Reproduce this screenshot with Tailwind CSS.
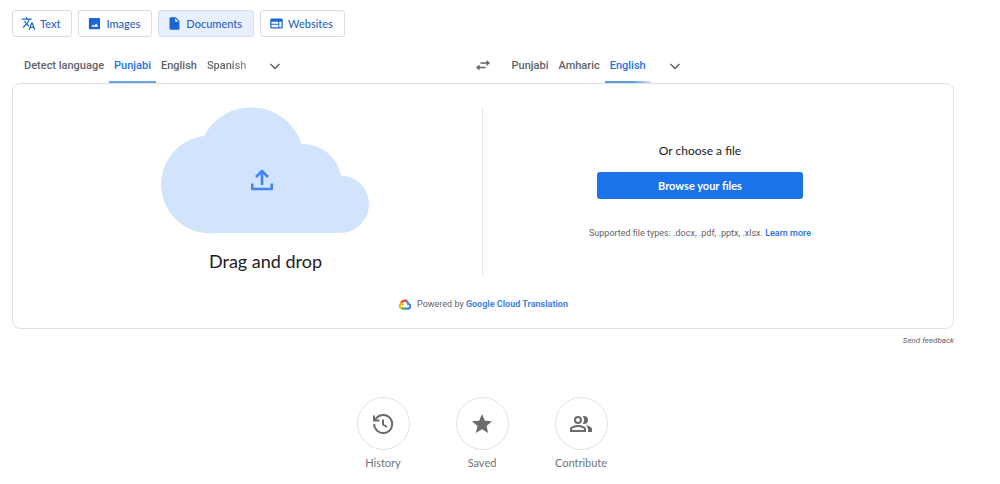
<!DOCTYPE html>
<html lang="en">
<head>
<meta charset="utf-8">
<meta name="viewport" content="width=device-width, initial-scale=1">
<title>Translate documents</title>
<script src="https://cdn.jsdelivr.net/npm/@tailwindcss/browser@4"></script>
</head>
<body class="bg-white font-['Roboto',sans-serif] text-[11px] leading-4 text-[#5f6368]">
<main class="pt-[10px] pr-[46px] pl-3">
  <nav aria-label="Translation types" class="flex gap-[6px] font-['Lato',sans-serif] font-medium text-[#2a63c4]">
    <button class="flex h-[27px] items-center gap-1 rounded-[3px] border border-[#dadce0] pr-[11px] pl-2">
      <svg class="size-[15px]" viewBox="0 0 24 24" fill="#1967d2" aria-hidden="true"><path d="M12.87 15.07l-2.54-2.51.03-.03A17.52 17.52 0 0 0 14.07 6H17V4h-7V2H8v2H1v2h11.17C11.5 7.92 10.44 9.75 9 11.35 8.07 10.32 7.3 9.19 6.69 8h-2c.73 1.63 1.73 3.17 2.98 4.56l-5.09 5.02L4 19l5-5 3.11 3.11.76-2.04zM18.5 10h-2L12 22h2l1.12-3h4.75L21 22h2l-4.5-12zm-2.62 7l1.62-4.33L19.12 17h-3.24z"/></svg>
      Text
    </button>
    <button class="flex h-[27px] items-center gap-1 rounded-[3px] border border-[#dadce0] pr-[11px] pl-2">
      <svg class="size-[15px]" viewBox="0 0 24 24" fill="#1967d2" aria-hidden="true"><path d="M21 19V5a2 2 0 0 0-2-2H5a2 2 0 0 0-2 2v14a2 2 0 0 0 2 2h14a2 2 0 0 0 2-2zM7 17l2.500-3.500 2.200 2.200 3-3.700L18 17H7z"/></svg>
      Images
    </button>
    <button aria-current="page" class="flex h-[27px] items-center gap-1 rounded-[3px] border border-[#d2dff5] bg-[#e8f0fe] pr-[11px] pl-2">
      <svg class="size-[15px]" viewBox="0 0 24 24" fill="#1967d2" aria-hidden="true"><path d="M6 2a2 2 0 0 0-2 2v16a2 2 0 0 0 2 2h12a2 2 0 0 0 2-2V8l-6-6H6zm7 7V3.500L18.500 9H13z"/></svg>
      Documents
    </button>
    <button class="flex h-[27px] items-center gap-1 rounded-[3px] border border-[#dadce0] pr-[11px] pl-2">
      <svg class="size-[15px]" viewBox="0 0 24 24" fill="#1967d2" aria-hidden="true"><path d="M20 4H4a2 2 0 0 0-2 2v12a2 2 0 0 0 2 2h16a2 2 0 0 0 2-2V6a2 2 0 0 0-2-2zm-5 14H4v-4h11v4zm0-5.500H4V9h11v3.500zM20 18h-3.500V9H20v9z"/></svg>
      Websites
    </button>
  </nav>

  <div class="mt-[11px] flex h-[35px] font-medium">
    <div role="tablist" aria-label="Source language" class="flex flex-1 pl-[7px]">
      <button role="tab" class="border-b-2 border-transparent px-[5px] pt-[2px]">Detect language</button>
      <button role="tab" aria-selected="true" class="border-b-2 border-[#6aa3e4] px-[5px] pt-[2px] text-[#1a73e8]">Punjabi</button>
      <button role="tab" class="border-b-2 border-transparent px-[5px] pt-[2px]">English</button>
      <button role="tab" class="border-b-2 border-transparent bg-linear-to-r from-[#5f6368] from-60% to-[#a6a9ac] bg-clip-text px-[5px] pt-[2px] text-transparent">Spanish</button>
      <button aria-label="More source languages" class="ml-3 px-[5px]">
        <svg class="size-[14px]" viewBox="0 0 14 14" fill="none" stroke="#5f6368" stroke-width="1.500" aria-hidden="true"><path d="M2.500 5 7 9.500 11.500 5"/></svg>
      </button>
    </div>
    <button aria-label="Swap languages" class="flex w-8 items-center justify-center">
      <svg class="size-4" viewBox="0 0 16 16" fill="#5f6368" aria-hidden="true"><path d="M5.500 4.300h6V2L15 5l-3.500 3V5.700h-6zM10.500 8.800h-6V6.500L1 9.500l3.500 3v-2.300h6z"/></svg>
    </button>
    <div role="tablist" aria-label="Target language" class="flex flex-1 pl-2">
      <button role="tab" class="border-b-2 border-transparent px-[5px] pt-[2px]">Punjabi</button>
      <button role="tab" class="border-b-2 border-transparent px-[5px] pt-[2px]">Amharic</button>
      <button role="tab" aria-selected="true" class="flex flex-col px-[5px] text-[#1a73e8]"><span class="flex flex-1 items-center pt-[2px]">English</span><span class="-mx-[5px] h-[2px] self-stretch bg-linear-to-r from-[#5b9bd8] from-60% to-[#d5e4f3]"></span></button>
      <button aria-label="More target languages" class="ml-3 px-[5px]">
        <svg class="size-[14px]" viewBox="0 0 14 14" fill="none" stroke="#5f6368" stroke-width="1.500" aria-hidden="true"><path d="M2.500 5 7 9.500 11.500 5"/></svg>
      </button>
    </div>
  </div>

  <section aria-label="Upload a document" class="rounded-lg border border-[#dfe1e5] px-9 pt-6 pb-4">
    <div class="grid grid-cols-2">
      <div class="flex h-[167px] flex-col items-center border-r border-[#e4e6e9]">
        <svg class="h-[125px] w-[206px] overflow-visible" viewBox="0 0 206 125" aria-hidden="true">
          <path fill="#d2e3fc" d="M53 125A48.700 48.700 0 0 1 41 28A53 53 0 0 1 138.500 36A39 39 0 0 1 178 67.500A28.700 28.700 0 0 1 176.500 125Z"/>
          <path fill="none" stroke="#4285f4" stroke-width="2.600" stroke-linejoin="round" d="M99 77V63M93 69 99 63 105 69M89.300 75.500V81H108.700V75.500"/>
        </svg>
        <p class="mt-4 font-['Lato',sans-serif] text-lg leading-6 text-[#202124]">Drag and drop</p>
      </div>
      <div class="flex flex-col items-center pt-[35px]">
        <p class="font-['Lato',sans-serif] text-xs leading-4 text-[#202124]">Or choose a file</p>
        <button class="mt-[13px] h-[27px] w-[206px] rounded-[3px] bg-[#1a73e8] font-['Lato',sans-serif] font-bold text-white">Browse your files</button>
        <p class="mt-[26px] text-[9px] leading-4">Supported file types: .docx, .pdf, .pptx, .xlsx. <a href="#" class="font-medium text-[#1a73e8]">Learn more</a></p>
      </div>
    </div>
    <div class="mt-[21px] flex items-center justify-center gap-[6px] text-[9px] leading-4">
      <svg class="h-[11px] w-[13px]" viewBox="0 0 26 22" fill="none" stroke-width="4.500" aria-hidden="true">
        <path stroke="#ea4335" d="M6 9A7.500 7.500 0 0 1 18.500 5.500"/>
        <path stroke="#4285f4" d="M18 5Q20.500 7.500 20.500 10A4.500 4.500 0 0 1 19.500 19H13"/>
        <path stroke="#34a853" d="M13.500 19H7"/>
        <path stroke="#fbbc04" d="M8 19A5 5 0 0 1 6.500 9.500Q9 9 11 12"/>
      </svg>
      <p>Powered by <a href="#" class="font-bold text-[#4285e8]">Google Cloud Translation</a></p>
    </div>
  </section>

  <div class="mt-1 flex justify-end text-[8px] leading-4 italic"><a href="#">Send feedback</a></div>

  <nav aria-label="Your translations" class="mt-12 flex justify-center gap-[46px] pr-[2px] font-['Lato',sans-serif] text-[#70757a]">
    <a href="#" class="flex w-[53px] flex-col items-center gap-[5px]">
      <span class="flex size-[53px] items-center justify-center rounded-full border border-[#dfe1e5]">
        <svg class="size-6" viewBox="0 0 24 24" fill="none" stroke="#6b6b6b" stroke-width="2" aria-hidden="true"><path d="M3.200 12A9 9 0 1 0 5.600 5.900L3.500 8M3 3.500V8.500H8.500M12 7.500V12.500L16 15"/></svg>
      </span>
      History
    </a>
    <a href="#" class="flex w-[53px] flex-col items-center gap-[5px]">
      <span class="flex size-[53px] items-center justify-center rounded-full border border-[#dfe1e5]">
        <svg class="size-6" viewBox="0 0 24 24" fill="#6b6b6b" aria-hidden="true"><path d="M12 17.270 18.180 21l-1.640-7.030L22 9.240l-7.190-.610L12 2 9.190 8.630 2 9.240l5.460 4.730L5.820 21z"/></svg>
      </span>
      Saved
    </a>
    <a href="#" class="flex w-[53px] flex-col items-center gap-[5px]">
      <span class="flex size-[53px] items-center justify-center rounded-full border border-[#dfe1e5]">
        <svg class="size-6" viewBox="0 0 24 24" fill="#6b6b6b" aria-hidden="true"><path d="M9 12a4 4 0 1 0 0-8 4 4 0 0 0 0 8zm0-6a2 2 0 1 1 0 4 2 2 0 0 1 0-4zM9 13c-2.670 0-8 1.340-8 4v3h16v-3c0-2.660-5.330-4-8-4zm6 5H3v-.990C3.200 16.290 6.300 15 9 15s5.800 1.290 6 2v1zM15 12a4 4 0 0 0 0-8c-.470 0-.910.100-1.330.240a5.980 5.980 0 0 1 0 7.520c.420.140.860.240 1.330.240zM16.670 13.130C18.040 14.060 19 15.320 19 17v3h4v-3c0-2.180-3.570-3.470-6.330-3.870z"/></svg>
      </span>
      Contribute
    </a>
  </nav>
</main>
</body>
</html>
